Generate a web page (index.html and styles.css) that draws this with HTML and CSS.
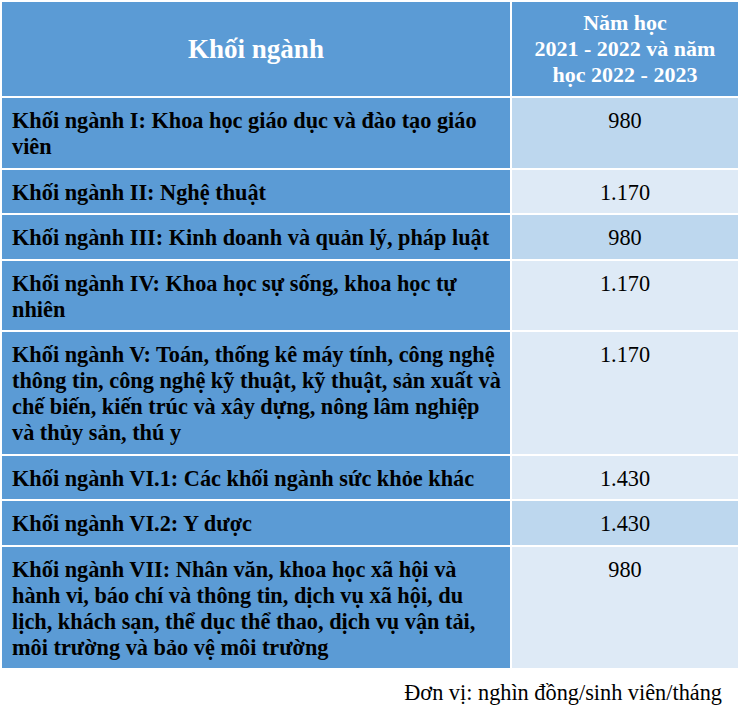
FILE: index.html
```html
<!DOCTYPE html>
<html lang="vi">
<head>
<meta charset="utf-8">
<link rel="stylesheet" href="styles.css">
</head>
<body>
<table class="fee">
  <colgroup><col class="c1"><col class="c2"></colgroup>
  <thead>
    <tr>
      <th class="h-main">Khối ngành</th>
      <th class="h-year">Năm học<br>2021 - 2022 và năm<br>học 2022 - 2023</th>
    </tr>
  </thead>
  <tbody>
    <tr class="odd"><td class="name">Khối ngành I: Khoa học giáo dục và đào tạo giáo viên</td><td class="val">980</td></tr>
    <tr class="even"><td class="name">Khối ngành II: Nghệ thuật</td><td class="val">1.170</td></tr>
    <tr class="odd"><td class="name">Khối ngành III: Kinh doanh và quản lý, pháp luật</td><td class="val">980</td></tr>
    <tr class="even"><td class="name">Khối ngành IV: Khoa học sự sống, khoa học tự nhiên</td><td class="val">1.170</td></tr>
    <tr class="even"><td class="name">Khối ngành V: Toán, thống kê máy tính, công nghệ thông tin, công nghệ kỹ thuật, kỹ thuật, sản xuất và chế biến, kiến trúc và xây dựng, nông lâm nghiệp và thủy sản, thú y</td><td class="val">1.170</td></tr>
    <tr class="even"><td class="name">Khối ngành VI.1: Các khối ngành sức khỏe khác</td><td class="val">1.430</td></tr>
    <tr class="odd"><td class="name">Khối ngành VI.2: Y dược</td><td class="val">1.430</td></tr>
    <tr class="even"><td class="name">Khối ngành VII: Nhân văn, khoa học xã hội và hành vi, báo chí và thông tin, dịch vụ xã hội, du lịch, khách sạn, thể dục thể thao, dịch vụ vận tải, môi trường và bảo vệ môi trường</td><td class="val">980</td></tr>
  </tbody>
</table>
<p class="unit">Đơn vị: nghìn đồng/sinh viên/tháng</p>
</body>
</html>
```
FILE: styles.css
```css
html, body {
  margin: 0;
  padding: 0;
  background: #ffffff;
}
body {
  font-family: "Liberation Serif", "Times New Roman", serif;
  width: 738px;
}
.fee {
  border-collapse: collapse;
  table-layout: fixed;
  width: 738px;
}
.c1 { width: 510px; }
.c2 { width: 228px; }
.fee th, .fee td {
  border: 2px solid #ffffff;
  vertical-align: top;
}
.fee th {
  background: #5b9bd5;
  color: #ffffff;
  font-weight: bold;
  text-align: center;
  vertical-align: middle;
}
.h-main {
  font-size: 27px;
  line-height: 26px;
  height: 94px;
  padding: 0;
}
.h-year {
  font-size: 22px;
  line-height: 26px;
  padding: 8px 4px;
}
.name {
  background: #5b9bd5;
  color: #000000;
  font-weight: bold;
  font-size: 22.3px;
  line-height: 26px;
  padding: 10px 7px 7.5px 10px;
}
.val {
  font-size: 22.3px;
  line-height: 26px;
  text-align: center;
  color: #000000;
  padding: 10px 6px 7.5px;
}
.odd .val { background: #bdd7ee; }
.even .val { background: #deeaf6; }
.unit {
  margin: 10px 16px 0 0;
  text-align: right;
  font-size: 22.3px;
  line-height: 26px;
  color: #000000;
}
```
